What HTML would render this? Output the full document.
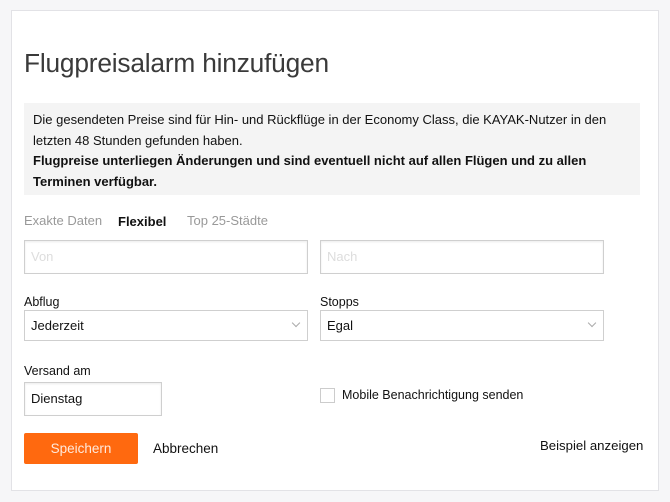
<!DOCTYPE html>
<html><head><style>
*{box-sizing:border-box;margin:0;padding:0}
body{width:670px;height:502px;background:#f6f6f8;font-family:"Liberation Sans",Arial,sans-serif;color:#111;position:relative;overflow:hidden}
.card{position:absolute;left:11px;top:10px;width:648px;height:481px;background:#fff;border:1px solid #e2e2e6}
.a{position:absolute;white-space:nowrap}
h1{position:absolute;left:24px;top:48px;font-size:26.3px;font-weight:normal;color:#3a3a3a;letter-spacing:-0.2px}
.info{position:absolute;left:24px;top:103px;width:616px;height:92px;background:#f4f4f4;padding:7px 9px;font-size:13px;line-height:20.5px;color:#111}
.inp{position:absolute;border:1px solid #cfcfcf;height:34px;font-size:13px;padding:0 6px;line-height:32px;box-shadow:inset 0 1px 2px rgba(0,0,0,.08);background:#fff}
.lab{font-size:12.5px;color:#111}
.chev{position:absolute;right:8px;top:9px;width:6px;height:6px;border-right:1px solid #aaa;border-bottom:1px solid #aaa;transform:rotate(45deg)}
</style></head><body>
<div class="card"></div>
<h1>Flugpreisalarm hinzufügen</h1>
<div class="info">Die gesendeten Preise sind für Hin- und Rückflüge in der Economy Class, die KAYAK-Nutzer in den letzten 48 Stunden gefunden haben.<br><b>Flugpreise unterliegen Änderungen und sind eventuell nicht auf allen Flügen und zu allen Terminen verfügbar.</b></div>
<div class="a" style="left:24px;top:213px;font-size:13px;color:#999">Exakte Daten</div>
<div class="a" style="left:118px;top:214px;font-size:13px;font-weight:bold;color:#111">Flexibel</div>
<div class="a" style="left:187px;top:213px;font-size:13px;color:#999">Top 25-Städte</div>
<div class="inp" style="left:24px;top:240px;width:284px;color:#ddd">Von</div>
<div class="inp" style="left:320px;top:240px;width:284px;color:#ddd">Nach</div>
<div class="a lab" style="left:24px;top:295px">Abflug</div>
<div class="a lab" style="left:320px;top:295px">Stopps</div>
<div class="inp" style="left:24px;top:310px;width:284px;height:31px;line-height:29px;box-shadow:none">Jederzeit<span class="chev"></span></div>
<div class="inp" style="left:320px;top:310px;width:284px;height:31px;line-height:29px;box-shadow:none">Egal<span class="chev"></span></div>
<div class="a lab" style="left:24px;top:364px">Versand am</div>
<div class="inp" style="left:24px;top:382px;width:138px">Dienstag</div>
<div class="a" style="left:320px;top:388px;width:15px;height:15px;border:1px solid #ccc;background:#fff"></div>
<div class="a lab" style="left:342px;top:388px">Mobile Benachrichtigung senden</div>
<div class="a" style="left:24px;top:433px;width:114px;height:31px;background:#ff690f;border-radius:2px;font-size:13.5px;text-align:center;line-height:31px;color:#ffe9dc">Speichern</div>
<div class="a" style="left:153px;top:441px;font-size:13.5px">Abbrechen</div>
<div class="a" style="left:540px;top:438px;font-size:13.2px">Beispiel anzeigen</div>
</body></html>
